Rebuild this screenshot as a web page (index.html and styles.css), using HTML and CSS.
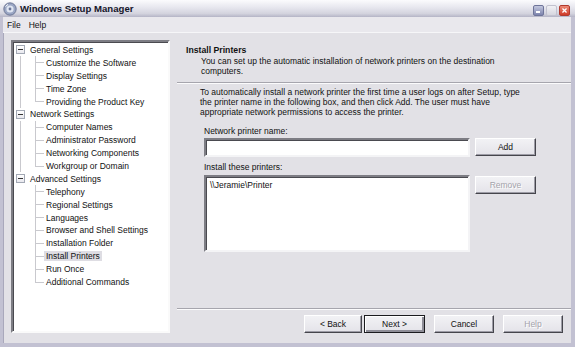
FILE: index.html
```html
<!DOCTYPE html>
<html lang="en">
<head>
    <meta charset="UTF-8">
    <title>Windows Setup Manager</title>
    <link rel="stylesheet" href="styles.css">
</head>
<body>

    <div class="window">
        <!-- Title bar -->
        <div class="titlebar">
            <svg class="app-icon" width="14" height="14" viewBox="0 0 14 14">
                <circle cx="7" cy="7" r="6.2" fill="#9aa6c4" stroke="#5d6788" stroke-width="0.8"/>
                <circle cx="7" cy="7" r="3.6" fill="#dfe5f2"/>
                <circle cx="7" cy="7" r="1.4" fill="#6b7699"/>
                <path d="M2.5 4.5 L5 2.4" stroke="#ffffff" stroke-width="1"/>
            </svg>
            <span class="title">Windows Setup Manager</span>
            <div class="caption-buttons">
                <span class="cap-btn minimize"></span>
                <span class="cap-btn maximize"></span>
                <span class="cap-btn close">
                    <svg width="11" height="11" viewBox="0 0 11 11">
                        <path d="M3 3 L8 8 M8 3 L3 8" stroke="#ffffff" stroke-width="1.6"/>
                    </svg>
                </span>
            </div>
        </div>

        <div class="frame">
            <!-- Menu -->
            <div class="menubar">
                <span class="menu-item">File</span>
                <span class="menu-item">Help</span>
            </div>

            <div class="dialog">
                <!-- Left tree -->
                <ul class="tree">
                    <li class="group">
                        <div class="node"><span class="toggle"></span><span class="label">General Settings</span></div>
                        <ul class="children">
                            <li class="leaf"><span class="branch"><i></i><i></i></span><span class="label">Customize the Software</span></li>
                            <li class="leaf"><span class="branch"><i></i><i></i></span><span class="label">Display Settings</span></li>
                            <li class="leaf"><span class="branch"><i></i><i></i></span><span class="label">Time Zone</span></li>
                            <li class="leaf"><span class="branch"><i></i><i></i></span><span class="label">Providing the Product Key</span></li>
                        </ul>
                    </li>
                    <li class="group">
                        <div class="node"><span class="toggle"></span><span class="label">Network Settings</span></div>
                        <ul class="children">
                            <li class="leaf"><span class="branch"><i></i><i></i></span><span class="label">Computer Names</span></li>
                            <li class="leaf"><span class="branch"><i></i><i></i></span><span class="label">Administrator Password</span></li>
                            <li class="leaf"><span class="branch"><i></i><i></i></span><span class="label">Networking Components</span></li>
                            <li class="leaf"><span class="branch"><i></i><i></i></span><span class="label">Workgroup or Domain</span></li>
                        </ul>
                    </li>
                    <li class="group">
                        <div class="node"><span class="toggle"></span><span class="label">Advanced Settings</span></div>
                        <ul class="children">
                            <li class="leaf"><span class="branch"><i></i><i></i></span><span class="label">Telephony</span></li>
                            <li class="leaf"><span class="branch"><i></i><i></i></span><span class="label">Regional Settings</span></li>
                            <li class="leaf"><span class="branch"><i></i><i></i></span><span class="label">Languages</span></li>
                            <li class="leaf"><span class="branch"><i></i><i></i></span><span class="label">Browser and Shell Settings</span></li>
                            <li class="leaf"><span class="branch"><i></i><i></i></span><span class="label">Installation Folder</span></li>
                            <li class="leaf"><span class="branch"><i></i><i></i></span><span class="label selected">Install Printers</span></li>
                            <li class="leaf"><span class="branch"><i></i><i></i></span><span class="label">Run Once</span></li>
                            <li class="leaf"><span class="branch"><i></i><i></i></span><span class="label">Additional Commands</span></li>
                        </ul>
                    </li>
                </ul>

                <!-- Right page -->
                <div class="page">
                    <div class="page-header">
                        <h1>Install Printers</h1>
                        <p class="desc">You can set up the automatic installation of network printers on the destination computers.</p>
                    </div>

                    <div class="page-body">
                        <p class="intro">To automatically install a network printer the first time a user logs on after Setup, type the printer name in the following box, and then click Add. The user must have appropriate network permissions to access the printer.</p>

                        <div class="field-label">Network printer name:</div>
                        <div class="field-row">
                            <input type="text" class="textbox">
                            <button class="btn side-btn">Add</button>
                        </div>

                        <div class="field-label second">Install these printers:</div>
                        <div class="field-row list-row">
                            <div class="listbox">\\Jeramie\Printer</div>
                            <button class="btn side-btn disabled">Remove</button>
                        </div>
                    </div>

                    <div class="page-footer">
                        <button class="btn back">&lt; Back</button>
                        <button class="btn next default">Next &gt;</button>
                        <button class="btn cancel">Cancel</button>
                        <button class="btn help disabled">Help</button>
                    </div>
                </div>
            </div>
        </div>
    </div>

</body>
</html>
```

FILE: styles.css
```css
html, body {
    margin: 0;
    padding: 0;
    width: 575px;
    height: 347px;
    overflow: hidden;
    background: #e2e1e6;
}

body {
    font-family: "Liberation Sans", Arial, sans-serif;
    font-size: 8.5px;
    color: #111;
}

.window {
    display: flex;
    flex-direction: column;
    height: 347px;
}

/* Title bar (XP silver look) */
.titlebar {
    height: 17px;
    display: flex;
    align-items: center;
    padding: 0 5px 0 3px;
    background: linear-gradient(#fbfbfd, #e6e6ee 45%, #d3d3de 80%, #b4b4c6);
    flex: none;
}

.app-icon {
    margin-right: 3px;
}

.title {
    font-weight: bold;
    font-size: 9.6px;
    color: #15152a;
}

.caption-buttons {
    margin-left: auto;
    display: flex;
    gap: 2px;
    margin-top: 3px;
}

.cap-btn {
    width: 11px;
    height: 11px;
    border-radius: 2px;
    box-sizing: border-box;
    display: flex;
    align-items: center;
    justify-content: center;
}

.minimize {
    background: linear-gradient(#c3c7de, #7d84ad);
    border: 1px solid #6e7499;
}

.minimize::after {
    content: "";
    width: 4px;
    height: 2px;
    background: #fff;
    margin-top: 4px;
    margin-right: 2px;
}

.maximize {
    background: linear-gradient(#f1f1f5, #d6d6df);
    border: 1px solid #c2c2cf;
}

.close {
    background: linear-gradient(#ec8a78, #cf3a28);
    border: 1px solid #b03a2e;
}

/* Window frame below the title */
.frame {
    flex: 1;
    display: flex;
    flex-direction: column;
    border-style: solid;
    border-color: #c2c1d2;
    border-width: 0 4px 4px 3px;
    box-shadow: inset 1px 0 #a9a8bb;
    min-height: 0;
}

.menubar {
    height: 16px;
    display: flex;
    align-items: center;
    background: #e9e8ed;
    border-bottom: 1px solid #f6f6f8;
    box-sizing: border-box;
    flex: none;
}

.menu-item {
    padding: 0 4px;
    line-height: 16px;
}

.dialog {
    flex: 1;
    display: flex;
    padding: 7px 0 10px 8px;
    min-height: 0;
}

/* Tree view */
.tree {
    list-style: none;
    margin: 0;
    padding: 1.5px 0 0 3px;
    width: 159px;
    box-sizing: border-box;
    background: #fff;
    border: 2px solid;
    border-color: #7d7d84 #fafafa #fafafa #7d7d84;
    box-shadow: inset 1px 1px #4a4a50;
    flex: none;
}

.group {
    margin: 0;
    padding: 0;
}

.node {
    display: flex;
    align-items: center;
    height: 12.9px;
}

.toggle {
    width: 9px;
    height: 9px;
    box-sizing: border-box;
    border: 1px solid #a2a8b4;
    background: linear-gradient(#ffffff, #e8e8ee);
    display: flex;
    align-items: center;
    justify-content: center;
    margin-right: 3px;
}

.toggle::before {
    content: "";
    width: 5px;
    height: 1px;
    background: #333;
}

.label {
    padding: 0 2px;
    line-height: 10px;
    white-space: nowrap;
}

.label.selected {
    background: #deddE3;
}

.children {
    list-style: none;
    margin: 0 0 0 4px;
    padding: 0;
    border-left: 1px solid #c9c9ce;
}

.group:last-child > .children {
    border-left-color: transparent;
}

.leaf {
    display: flex;
    align-items: center;
    height: 12.9px;
    padding-left: 14px;
}

.branch {
    width: 9px;
    height: 100%;
    display: flex;
    flex-direction: column;
    flex: none;
}

.branch i {
    display: block;
    border-left: 1px solid #c9c9ce;
}

.branch i:first-child {
    height: 6px;
    border-bottom: 1px solid #c9c9ce;
    flex: none;
}

.branch i:last-child {
    flex: 1;
}

.leaf:last-child .branch i:last-child {
    border-left-color: transparent;
}

/* Right side page */
.page {
    flex: 1;
    display: flex;
    flex-direction: column;
    margin-left: 7px;
}

.page-header {
    padding: 5px 0 6px 9px;
    border-bottom: 1px solid #a6a5ad;
}

.page-header h1 {
    margin: 0;
    font-size: 8.7px;
    line-height: 10px;
    font-weight: bold;
}

.desc {
    margin: 1px 0 0 15px;
    line-height: 10px;
    width: 320px;
}

.page-body {
    border-top: 1px solid #fbfbfc;
    padding: 3px 0 0 23px;
}

.intro {
    margin: 0;
    line-height: 10px;
    width: 330px;
}

.field-label {
    margin: 9px 0 0 4px;
    line-height: 10px;
}

.field-label.second {
    margin-top: 5px;
}

.field-row {
    display: flex;
    align-items: flex-start;
    margin: 2px 0 0 4px;
    gap: 5px;
}

.list-row {
    margin-top: 3px;
}

.textbox {
    width: 266px;
    height: 19px;
    box-sizing: border-box;
    margin: 0;
    padding: 0 3px;
    background: #fff;
    border: 2px solid;
    border-color: #7d7d84 #f4f4f6 #f4f4f6 #7d7d84;
    box-shadow: inset 1px 1px #4a4a50;
    font: inherit;
}

.listbox {
    width: 266px;
    height: 77px;
    box-sizing: border-box;
    padding: 3px 4px;
    line-height: 10px;
    background: #fff;
    border: 2px solid;
    border-color: #7d7d84 #f4f4f6 #f4f4f6 #7d7d84;
    box-shadow: inset 1px 1px #4a4a50;
}

/* Buttons */
.btn {
    height: 18px;
    box-sizing: border-box;
    margin: 0;
    padding: 0;
    font: inherit;
    color: #111;
    background: linear-gradient(#f2f2f5, #e4e3e9);
    border: 1px solid;
    border-color: #ffffff #45454c #45454c #ffffff;
    box-shadow: inset -1px -1px #9d9ca6;
    text-align: center;
}

.btn.disabled {
    color: #a4a3ab;
    text-shadow: 1px 1px #ffffff;
}

.btn.default {
    border: 1px solid #1b1b1f;
    box-shadow: inset 1px 1px #ffffff, inset -2px -2px #8e8d97;
}

.side-btn {
    width: 61px;
}

.list-row .side-btn {
    margin-top: 1px;
}

.page-footer {
    margin-top: auto;
    display: flex;
    justify-content: flex-end;
    padding: 6px 8px 0 0;
    border-top: 1px solid #a6a5ad;
    box-shadow: inset 0 1px #fbfbfc;
}

.back {
    width: 58px;
}

.next {
    width: 61px;
    margin-left: 2px;
}

.cancel {
    width: 60px;
    margin-left: 9px;
}

.help {
    width: 60px;
    margin-left: 9px;
}
```
